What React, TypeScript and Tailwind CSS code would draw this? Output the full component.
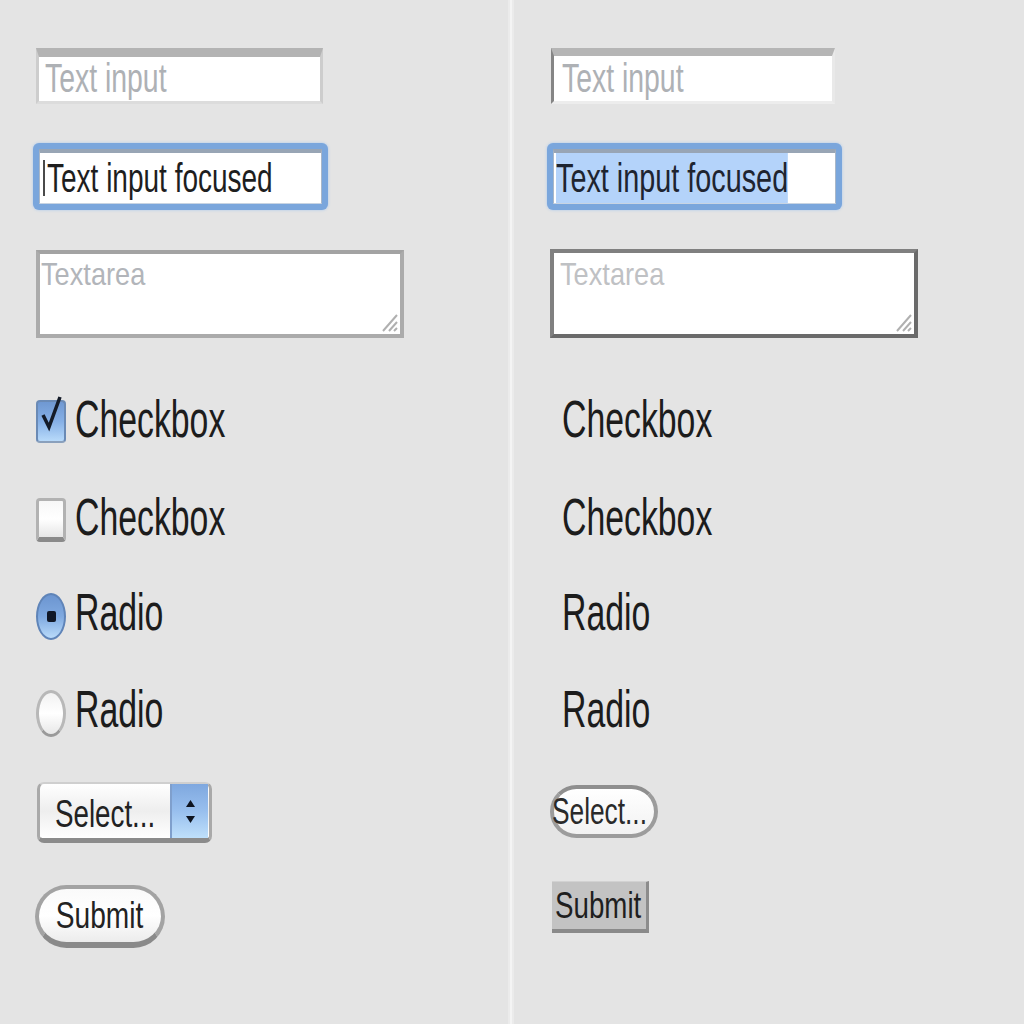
import React from "react";

const F = "font-['Liberation_Sans',Arial,sans-serif]";

function CheckedBox() {
  return (
    <div className="relative w-[30px] h-[43px] shrink-0 rounded-[4px] border-[2px] border-[#6a8ab5] border-b-[#8aa0bc] bg-gradient-to-b from-[#6f98d2] via-[#86b0e6] to-[#b8dafa]">
      <svg className="absolute left-[-2px] top-[-2px] overflow-visible" width="30" height="43" viewBox="0 0 30 43">
        <path d="M7 15 L13 27 L24 -3" fill="none" stroke="#141b28" strokeWidth="3.5" strokeLinejoin="miter" />
      </svg>
    </div>
  );
}

function EmptyBox() {
  return (
    <div className="w-[30px] h-[44px] shrink-0 rounded-[4px] border-[3px] border-[#b2b2b2] border-b-[5px] border-b-[#8a8a8a] bg-gradient-to-b from-[#f7f7f7] via-[#ffffff] to-[#e6e6e6]" />
  );
}

function CheckedRadio() {
  return (
    <div className="w-[30px] h-[47px] shrink-0 rounded-[50%] border-[2px] border-[#5f84b8] bg-gradient-to-b from-[#6c95d0] via-[#7fa9e0] to-[#b9dbfa] flex items-center justify-center">
      <div className="w-[9px] h-[11px] rounded-[2px] bg-[#111827]" />
    </div>
  );
}

function EmptyRadio() {
  return (
    <div className="w-[30px] h-[47px] shrink-0 rounded-[50%] border-[3px] border-[#b8b8b8] border-b-[#9a9a9a] bg-gradient-to-b from-[#f2f2f2] via-[#ffffff] to-[#e8e8e8]" />
  );
}

function Label({ text }: { text: string }) {
  return (
    <span className="-mt-[7px] inline-block origin-left scale-x-[0.65] whitespace-nowrap text-[52px] leading-[52px] text-[#1c1c1c]">
      {text}
    </span>
  );
}

export default function App() {
  return (
    <div className={`w-[1024px] h-[1024px] bg-[#e4e4e4] flex overflow-hidden ${F}`}>
      {/* Left column */}
      <div className="w-[508px] shrink-0 pt-[48px] pl-[36px] flex flex-col items-start">
        {/* text input */}
        <div className="w-[287px] h-[56px] bg-white border-t-[9px] border-t-[#b3b3b3] border-x-[3px] border-x-[#cdcdcd] border-b-[3px] border-b-[#dcdcdc] pl-[6px] pt-[1px] overflow-hidden">
          <span className="inline-block origin-left scale-x-[0.71] whitespace-nowrap text-[40px] leading-[40px] text-[#aeb1b5]">Text input</span>
        </div>
        {/* focused input */}
        <div className="mt-[39px] -ml-[3px] w-[295px] h-[67px] rounded-[6px] bg-[#7aa6dc] shadow-[0_0_3px_#a9c8ee] p-[6px]">
          <div className="w-full h-full bg-white border-t-[4px] border-t-[#98a5b5] border-x-[1px] border-x-[#a9b7c8] border-b-[1px] border-b-[#c8d4e2] flex items-start pl-[3px] pt-[5px] overflow-hidden">
            <div className="w-[2px] h-[36px] mt-[2px] bg-[#4a4a4a] shrink-0" />
            <span className="ml-[2px] inline-block origin-left scale-x-[0.70] whitespace-nowrap text-[40px] leading-[40px] text-[#1e1e1e]">Text input focused</span>
          </div>
        </div>
        {/* textarea */}
        <div className="relative mt-[40px] w-[368px] h-[88px] bg-white border-[4px] border-[#ababab] border-t-[#a3a3a3] pl-[1px] pt-[4px]">
          <span className="inline-block origin-left scale-x-[0.85] whitespace-nowrap text-[32px] leading-[32px] text-[#b2b5ba]">Textarea</span>
          <svg className="absolute right-[2px] bottom-[2px]" width="18" height="20" viewBox="0 0 18 20">
            <path d="M17 3 L3 19 M17 10 L9 19 M17 16 L14 19" stroke="#b0b0b0" strokeWidth="2" fill="none" />
          </svg>
        </div>
        {/* checkbox checked */}
        <div className="mt-[62px] h-[43px] flex items-start">
          <CheckedBox />
          <div className="ml-[9px]"><Label text="Checkbox" /></div>
        </div>
        {/* checkbox */}
        <div className="mt-[55px] h-[44px] flex items-start">
          <EmptyBox />
          <div className="ml-[9px]"><Label text="Checkbox" /></div>
        </div>
        {/* radio checked */}
        <div className="mt-[51px] h-[47px] flex items-start">
          <CheckedRadio />
          <div className="ml-[9px]"><Label text="Radio" /></div>
        </div>
        {/* radio */}
        <div className="mt-[50px] h-[47px] flex items-start">
          <EmptyRadio />
          <div className="ml-[9px]"><Label text="Radio" /></div>
        </div>
        {/* select */}
        <div className="mt-[45px] ml-[1px] w-[175px] h-[61px] rounded-[7px] border-t-[2px] border-t-[#cfcfcf] border-x-[3px] border-x-[#a9a9a9] border-b-[5px] border-b-[#8b8b8b] bg-gradient-to-b from-[#ffffff] via-[#eeeeee] to-[#ffffff] flex items-stretch">
          <div className="flex-1 pl-[15px] pt-[11px] overflow-hidden">
            <span className="inline-block origin-left scale-x-[0.73] whitespace-nowrap text-[38px] leading-[38px] text-[#222]">Select...</span>
          </div>
          <div className="w-[38px] mr-[1px] border-l-[2px] border-l-[#7f9fcc] bg-gradient-to-b from-[#7fa8df] via-[#98bfee] to-[#bfe0fb] flex flex-col items-center justify-center gap-[9px]">
            <svg width="9" height="7" viewBox="0 0 9 7"><path d="M4.5 0 L9 7 L0 7 Z" fill="#0e1420" /></svg>
            <svg width="9" height="7" viewBox="0 0 9 7"><path d="M0 0 L9 0 L4.5 7 Z" fill="#0e1420" /></svg>
          </div>
        </div>
        {/* submit */}
        <div className="mt-[42px] -ml-[1px] w-[130px] h-[63px] rounded-full border-[4px] border-[#a3a3a3] border-b-[6px] border-b-[#8a8a8a] bg-gradient-to-b from-[#fafafa] via-[#ffffff] to-[#ececec] flex items-center justify-center">
          <span className="inline-block scale-x-[0.76] whitespace-nowrap text-[37px] leading-[37px] text-[#222]">Submit</span>
        </div>
      </div>

      {/* divider */}
      <div className="w-[6px] shrink-0 bg-[#f4f4f4] border-x-[2px] border-x-[#ebebeb]" />

      {/* Right column */}
      <div className="flex-1 pt-[48px] pl-[37px] flex flex-col items-start">
        {/* text input */}
        <div className="w-[284px] h-[56px] bg-white border-t-[8px] border-t-[#b5b5b5] border-l-[3px] border-l-[#858585] border-r-[3px] border-r-[#e9e9e9] border-b-[3px] border-b-[#ededed] pl-[8px] pt-[2px] overflow-hidden">
          <span className="inline-block origin-left scale-x-[0.71] whitespace-nowrap text-[40px] leading-[40px] text-[#aeb1b5]">Text input</span>
        </div>
        {/* focused input with selection */}
        <div className="mt-[39px] -ml-[4px] w-[295px] h-[67px] rounded-[6px] bg-[#7aa6dc] shadow-[0_0_3px_#a9c8ee] p-[6px]">
          <div className="w-full h-full bg-white border-t-[4px] border-t-[#98a5b5] border-x-[1px] border-x-[#a9b7c8] border-b-[1px] border-b-[#c8d4e2] flex items-stretch pl-[2px] overflow-hidden">
            <span className="inline-block origin-left scale-x-[0.72] whitespace-nowrap text-[40px] leading-[40px] pt-[5px] bg-[#b4d3fa] text-[#1e2430]">Text input focused</span>
          </div>
        </div>
        {/* textarea */}
        <div className="relative mt-[39px] -ml-[1px] w-[368px] h-[89px] bg-white border-[4px] border-[#808080] border-r-[#6a6a6a] border-b-[#6a6a6a] pl-[6px] pt-[5px]">
          <span className="inline-block origin-left scale-x-[0.85] whitespace-nowrap text-[32px] leading-[32px] text-[#bfc1c4]">Textarea</span>
          <svg className="absolute right-[2px] bottom-[2px]" width="18" height="20" viewBox="0 0 18 20">
            <path d="M17 3 L3 19 M17 10 L9 19 M17 16 L14 19" stroke="#b0b0b0" strokeWidth="2" fill="none" />
          </svg>
        </div>
        {/* labels */}
        <div className="mt-[62px] h-[43px] ml-[11px] flex items-start"><Label text="Checkbox" /></div>
        <div className="mt-[55px] h-[44px] ml-[11px] flex items-start"><Label text="Checkbox" /></div>
        <div className="mt-[51px] h-[47px] ml-[11px] flex items-start"><Label text="Radio" /></div>
        <div className="mt-[50px] h-[47px] ml-[11px] flex items-start"><Label text="Radio" /></div>
        {/* select */}
        <div className="mt-[48px] -ml-[1px] w-[108px] h-[53px] rounded-full border-[4px] border-[#9c9c9c] border-t-[#8f8f8f] bg-gradient-to-b from-[#ffffff] to-[#f2f2f2] flex items-center">
          <span className="-ml-[2px] inline-block origin-left scale-x-[0.73] whitespace-nowrap text-[36px] leading-[36px] text-[#2a2a2a]">Select...</span>
        </div>
        {/* submit */}
        <div className="mt-[43px] ml-[1px] w-[97px] h-[52px] bg-[#c3c3c3] border-t-[1px] border-t-[#d2d2d2] border-r-[3px] border-r-[#8c8c8c] border-b-[4px] border-b-[#8a8a8a] flex items-center pl-[3px] overflow-hidden">
          <span className="inline-block origin-left scale-x-[0.77] whitespace-nowrap text-[36px] leading-[36px] text-[#1f1f1f]">Submit</span>
        </div>
      </div>
    </div>
  );
}
